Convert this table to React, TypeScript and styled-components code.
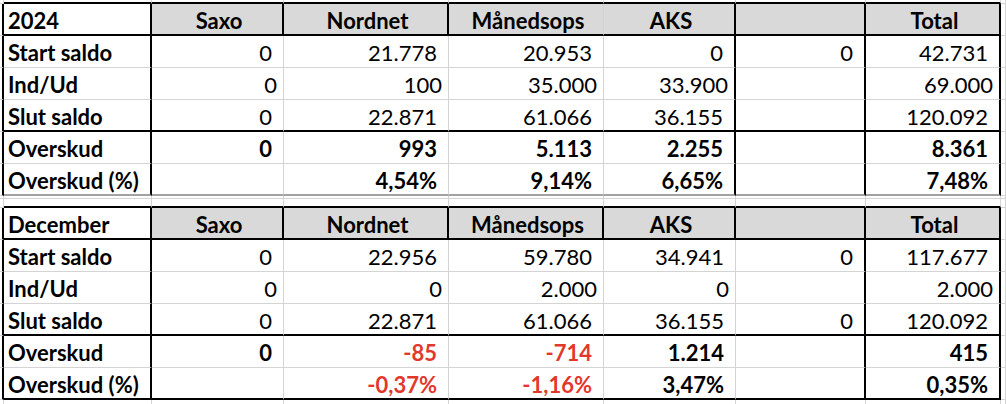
import { Fragment } from 'react'
import styled, { createGlobalStyle } from 'styled-components'

type Line = 'dark' | 'grid' | 'mid' | 'none'
type Align = 'left' | 'center' | 'right'

const LINE: Record<Line, string> = {
  dark: '2px solid #000',
  grid: '1px solid #d4d4d4',
  mid: '2px solid #a2a2a2',
  none: '0',
}

const GlobalStyle = createGlobalStyle`
  html, body {
    margin: 0;
    padding: 0;
    background: #fff;
  }
  body {
    font-family: Lato, "Liberation Sans", sans-serif;
    overflow: hidden;
  }
`

// column widths: left margin, label, Saxo, Nordnet, Månedsops, AKS, blank, Total, right margin
const Sheet = styled.div`
  display: grid;
  grid-template-columns: 4px 148px 132px 165px 155px 132px 130px 135px 5px;
  grid-template-rows: 4px repeat(6, 32px) 3px 9px repeat(6, 32px) 1fr;
  width: 1006px;
  height: 404px;
  overflow: hidden;
`

type CellProps = {
  $right: Line
  $bottom: Line
}

const Cell = styled.div<CellProps>`
  box-sizing: border-box;
  min-width: 0;
  border-right: ${({ $right }) => LINE[$right]};
  border-bottom: ${({ $bottom }) => LINE[$bottom]};
`

const TextCell = styled(Cell)<{ $align: Align; $bold?: boolean; $red?: boolean; $fill?: boolean; $pad?: number }>`
  display: flex;
  align-items: center;
  justify-content: ${({ $align }) => ($align === 'left' ? 'flex-start' : $align === 'center' ? 'center' : 'flex-end')};
  padding: 2px ${({ $pad }) => $pad ?? 0}px 0 4px;
  background: ${({ $fill }) => ($fill ? '#d9d9d9' : '#fff')};
  color: ${({ $red }) => ($red ? '#e2382c' : '#000')};
  font-size: 22px;
  font-weight: ${({ $bold }) => ($bold ? 700 : 400)};
  white-space: nowrap;
  overflow: hidden;
`

type BodyRow = {
  label: string
  values: string[]
  bold?: boolean
  tight?: boolean
}

type Table = {
  title: string
  headerSplit: Line
  bodySplit: Line
  closing: Line
  rows: BodyRow[]
}

const HEADERS = ['Saxo', 'Nordnet', 'Månedsops', 'AKS', '', 'Total']

const TABLES: Table[] = [
  {
    title: '2024',
    headerSplit: 'grid',
    bodySplit: 'dark',
    closing: 'mid',
    rows: [
      { label: 'Start saldo', values: ['0', '21.778', '20.953', '0', '0', '42.731'] },
      { label: 'Ind/Ud', values: ['0', '100', '35.000', '33.900', '', '69.000'], tight: true },
      { label: 'Slut saldo', values: ['0', '22.871', '61.066', '36.155', '', '120.092'] },
      { label: 'Overskud', values: ['0', '993', '5.113', '2.255', '', '8.361'], bold: true },
      { label: 'Overskud (%)', values: ['', '4,54%', '9,14%', '6,65%', '', '7,48%'], bold: true },
    ],
  },
  {
    title: 'December',
    headerSplit: 'dark',
    bodySplit: 'grid',
    closing: 'dark',
    rows: [
      { label: 'Start saldo', values: ['0', '22.956', '59.780', '34.941', '0', '117.677'] },
      { label: 'Ind/Ud', values: ['0', '0', '2.000', '0', '', '2.000'], tight: true },
      { label: 'Slut saldo', values: ['0', '22.871', '61.066', '36.155', '0', '120.092'] },
      { label: 'Overskud', values: ['0', '-85', '-714', '1.214', '', '415'], bold: true },
      { label: 'Overskud (%)', values: ['', '-0,37%', '-1,16%', '3,47%', '', '0,35%'], bold: true },
    ],
  },
]

const COLUMN_COUNT = 9

function Strip({ bottom, id }: { bottom: 'table' | 'grid' | 'none'; id: string }) {
  return (
    <>
      {Array.from({ length: COLUMN_COUNT }, (_, col) => {
        const inside = col > 0 && col < COLUMN_COUNT - 1
        const line: Line = bottom === 'none' ? 'none' : bottom === 'table' && inside ? 'dark' : 'grid'
        return <Cell key={`${id}-${col}`} $right="grid" $bottom={line} />
      })}
    </>
  )
}

function headerRight(table: Table, col: number): Line {
  if (col === 8) return 'grid'
  if (col === 4) return table.headerSplit
  return 'dark'
}

function bodyRight(table: Table, col: number): Line {
  if (col === 8) return 'grid'
  if (col === 5) return table.bodySplit
  if (col >= 2 && col <= 4) return 'grid'
  return 'dark'
}

function rowBottom(table: Table, index: number): Line {
  if (index === 2) return 'dark'
  if (index === table.rows.length - 1) return table.closing
  return 'grid'
}

function SheetTable({ table }: { table: Table }) {
  return (
    <>
      <Cell $right={headerRight(table, 0)} $bottom="grid" />
      <TextCell $right={headerRight(table, 1)} $bottom="dark" $align="left" $bold>
        {table.title}
      </TextCell>
      {HEADERS.map((header, i) => (
        <TextCell key={`h-${i}`} $right={headerRight(table, i + 2)} $bottom="dark" $align="center" $bold $fill>
          {header}
        </TextCell>
      ))}
      <Cell $right="grid" $bottom="grid" />

      {table.rows.map((row, index) => {
        const bottom = rowBottom(table, index)
        return (
          <Fragment key={row.label}>
            <Cell $right={bodyRight(table, 0)} $bottom="grid" />
            <TextCell $right={bodyRight(table, 1)} $bottom={bottom} $align="left" $bold>
              {row.label}
            </TextCell>
            {row.values.map((value, i) => (
              <TextCell
                key={`v-${i}`}
                $right={bodyRight(table, i + 2)}
                $bottom={bottom}
                $align="right"
                $bold={row.bold}
                $red={value.startsWith('-')}
                $pad={row.tight ? 6 : 11}
              >
                {value}
              </TextCell>
            ))}
            <Cell $right="grid" $bottom="grid" />
          </Fragment>
        )
      })}
    </>
  )
}

export default function App() {
  return (
    <>
      <GlobalStyle />
      <Sheet>
        <Strip id="top" bottom="table" />
        <SheetTable table={TABLES[0]} />
        <Strip id="gap-a" bottom="grid" />
        <Strip id="gap-b" bottom="table" />
        <SheetTable table={TABLES[1]} />
        <Strip id="end" bottom="none" />
      </Sheet>
    </>
  )
}
